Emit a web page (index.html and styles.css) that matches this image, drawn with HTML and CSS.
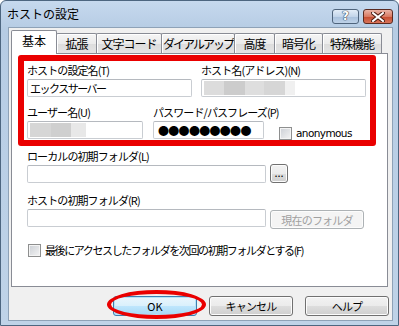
FILE: index.html
```html
<!DOCTYPE html>
<html lang="ja">
<head>
    <meta charset="UTF-8">
    <title>ホストの設定</title>
    <link rel="stylesheet" href="styles.css">
</head>
<body>
    <div class="window">
        <div class="titlebar">
            <span class="title">ホストの設定</span>
            <div class="caption-btns">
                <span class="cap help">?</span>
                <span class="cap close">
                    <svg width="14" height="10" viewBox="0 0 14 10">
                        <path d="M2 1 L12 9 M12 1 L2 9" stroke="#4a1a10" stroke-width="4" stroke-linecap="square"/>
                        <path d="M2 1 L12 9 M12 1 L2 9" stroke="#fff" stroke-width="2" stroke-linecap="square"/>
                    </svg>
                </span>
            </div>
        </div>

        <div class="client">
            <div class="tabs">
                <span class="tab active w-kihon">基本</span>
                <span class="tab w-kakucho">拡張</span>
                <span class="tab w-moji">文字コード</span>
                <span class="tab w-dial">ダイアルアップ</span>
                <span class="tab w-kodo">高度</span>
                <span class="tab w-ango">暗号化</span>
                <span class="tab w-tokushu">特殊機能</span>
            </div>

            <div class="panel">
                <div class="mark-rect"></div>

                <div class="row row-1">
                    <div class="field w-165">
                        <span class="label">ホストの設定名(T)</span>
                        <div class="input">エックスサーバー</div>
                    </div>
                    <div class="field w-165">
                        <span class="label">ホスト名(アドレス)(N)</span>
                        <div class="input">
                            <span class="blur b-host1"></span><span class="blur b-host2"></span><span class="blur b-host3"></span><span class="blur b-host4"></span><span class="blur b-host5"></span>
                        </div>
                    </div>
                </div>

                <div class="row row-2">
                    <div class="field w-116">
                        <span class="label">ユーザー名(U)</span>
                        <div class="input">
                            <span class="blur b-user1"></span><span class="blur b-user2"></span><span class="blur b-user3"></span>
                        </div>
                    </div>
                    <div class="field w-111">
                        <span class="label">パスワード/パスフレーズ(P)</span>
                        <div class="input dots">●●●●●●●●●</div>
                    </div>
                    <label class="check anon"><span class="box"></span><span class="check-text latin">anonymous</span></label>
                </div>

                <div class="field row-3">
                    <span class="label">ローカルの初期フォルダ(L)</span>
                    <div class="input-line">
                        <div class="input w-239"></div>
                        <span class="btn small">...</span>
                    </div>
                </div>

                <div class="field row-4">
                    <span class="label">ホストの初期フォルダ(R)</span>
                    <div class="input-line">
                        <div class="input w-239"></div>
                        <span class="btn disabled w-94">現在のフォルダ</span>
                    </div>
                </div>

                <label class="check row-5"><span class="box"></span><span class="check-text tight">最後にアクセスしたフォルダを次回の初期フォルダとする(F)</span></label>
            </div>

            <div class="buttons">
                <span class="btn default w-84">OK<span class="mark-ellipse"></span></span>
                <span class="btn w-84">キャンセル</span>
                <span class="btn w-84">ヘルプ</span>
            </div>
        </div>
    </div>
</body>
</html>
```

FILE: styles.css
```css
body {
    margin: 0;
    background: #ffffff;
    font-family: "Noto Sans CJK JP", sans-serif;
    color: #000;
}

.window {
    width: 399px;
    height: 326px;
    box-sizing: border-box;
    background: linear-gradient(#c6d9ee, #b6cce4 28px, #bfd3e8);
    border: 1px solid #4d6680;
    border-radius: 6px 6px 0 0;
    display: flex;
    flex-direction: column;
}

/* title bar */

.titlebar {
    height: 26px;
    display: flex;
    align-items: flex-start;
    justify-content: space-between;
}

.title {
    font-size: 12px;
    line-height: 14px;
    margin: 6px 0 0 6px;
}

.caption-btns {
    display: flex;
    gap: 4px;
    margin: 8px 5px 0 0;
}

.cap {
    height: 13px;
    border: 1px solid #4f647c;
    border-radius: 3px;
    display: flex;
    align-items: center;
    justify-content: center;
}

.cap.help {
    width: 25px;
    background: linear-gradient(#e3edf8, #c3d5ea 50%, #a8c0dc 51%, #bed2e8);
    color: #fff;
    font-family: "DejaVu Sans", sans-serif;
    font-weight: bold;
    font-size: 12px;
    line-height: 13px;
    text-shadow: 0 0 1px #2c3e55, 0 0 1px #2c3e55, 0 0 1px #2c3e55;
}

.cap.close {
    width: 28px;
    background: linear-gradient(#eab3a6, #d97a63 50%, #c54a2e 51%, #d8745a);
    border-color: #5a2a20;
}

/* client area */

.client {
    flex: 1;
    margin: 0 5px 4px 7px;
    background: #f0f0f0;
    border: 1px solid #8ea2b7;
}

.tabs {
    display: flex;
    align-items: flex-end;
    height: 24px;
    margin: 1px 0 0 2px;
    position: relative;
    z-index: 1;
}

.tab {
    box-sizing: border-box;
    height: 20px;
    border: 1px solid #898c95;
    border-bottom: none;
    border-radius: 2px 2px 0 0;
    background: linear-gradient(#f5f5f5, #ebebeb 50%, #dcdcdc 51%, #e4e4e4);
    box-shadow: inset 1px 1px 0 #fff;
    font-size: 12px;
    letter-spacing: -1px;
    line-height: 19px;
    text-align: center;
    white-space: nowrap;
}

.tab + .tab {
    margin-left: -1px;
}

.tab.active {
    height: 24px;
    background: #fff;
    box-shadow: none;
    letter-spacing: 0;
    line-height: 20px;
    margin-bottom: -1px;
    position: relative;
    z-index: 2;
}

.w-kihon { width: 46px; }
.w-kakucho { width: 41px; }
.w-moji { width: 66px; }
.w-dial { width: 74px; letter-spacing: -2px; }
.w-kodo { width: 41px; }
.w-ango { width: 49px; }
.w-tokushu { width: 60px; }

.panel {
    box-sizing: border-box;
    width: 377px;
    height: 234px;
    margin-left: 2px;
    border: 1px solid #898c95;
    background: #fff;
    padding: 9px 0 0 15px;
    position: relative;
}

.mark-rect {
    position: absolute;
    left: 6px;
    top: 1px;
    width: 358px;
    height: 91px;
    box-sizing: border-box;
    border: 6px solid #ea0000;
    border-radius: 3px;
}

/* fields */

.row {
    display: flex;
    gap: 9px;
}

.row-2 {
    margin-top: 8px;
    gap: 10px;
}

.row-3 {
    margin-top: 9px;
}

.row-4 {
    margin-top: 10px;
}

.field {
    display: flex;
    flex-direction: column;
}

.label {
    font-size: 11px;
    letter-spacing: -0.9px;
    line-height: 14px;
    white-space: nowrap;
}

.input {
    box-sizing: border-box;
    height: 18px;
    margin-top: 2px;
    border: 1px solid #c9cdd2;
    border-top-color: #b5b9bf;
    border-radius: 2px;
    background: #fff;
    font-size: 11px;
    letter-spacing: -1.5px;
    line-height: 16px;
    padding: 0 2px;
    display: flex;
    align-items: stretch;
    white-space: nowrap;
}

.input .blur {
    margin: 1px 0;
}

.w-165 { width: 165px; }
.w-116 { width: 116px; }
.w-111 { width: 111px; }
.w-239 { width: 239px; }
.w-94 { width: 94px; }
.w-84 { width: 84px; }

.b-user1 { width: 21px; background: #d6d6d6; }
.b-user2 { width: 20px; background: #cfcfcf; }
.b-user3 { width: 15px; background: #e8e8e8; }

.b-host1 { width: 20px; background: #dcdcdc; }
.b-host2 { width: 21px; background: #cccccc; }
.b-host3 { width: 19px; background: #dedede; }
.b-host4 { width: 21px; background: #d6d6d6; }
.b-host5 { width: 10px; background: #f0f0f0; }

.dots {
    font-size: 11px;
    letter-spacing: -0.7px;
    padding-left: 4px;
}

.input-line {
    display: flex;
    align-items: flex-start;
    gap: 4px;
}

/* checkboxes */

.check {
    display: flex;
    align-items: center;
    gap: 4px;
}

.anon {
    margin: 21px 0 0 5px;
    align-self: flex-start;
}

.row-5 {
    margin: 14px 0 0 1px;
}

.box {
    box-sizing: border-box;
    width: 13px;
    height: 13px;
    border: 1px solid #8e8f8f;
    background: linear-gradient(135deg, #cbcfd5, #f4f4f4);
    box-shadow: inset 0 0 0 1px #f4f4f4;
}

.check-text {
    font-size: 11px;
    letter-spacing: -0.8px;
    line-height: 14px;
    white-space: nowrap;
}

.check-text.tight {
    letter-spacing: -1.4px;
}

.check-text.latin {
    font-family: "DejaVu Sans", sans-serif;
    font-size: 10.5px;
    letter-spacing: -0.6px;
}

/* buttons */

.btn {
    box-sizing: border-box;
    height: 20px;
    border: 1px solid #707070;
    border-radius: 3px;
    background: linear-gradient(#f2f2f2, #ebebeb 50%, #dddddd 51%, #cfcfcf);
    box-shadow: inset 0 0 0 1px #fcfcfc;
    font-size: 11px;
    letter-spacing: -0.8px;
    line-height: 18px;
    text-align: center;
    white-space: nowrap;
    position: relative;
}

.btn.small {
    width: 18px;
    height: 19px;
    margin-top: 1px;
    line-height: 14px;
    letter-spacing: 0;
}

.input-line .btn.disabled {
    height: 19px;
    margin-top: 3px;
    border-color: #adb2b5;
    background: #f4f4f4;
    color: #a0a0a0;
}

.btn.default {
    border-color: #3c7fb1;
    background: linear-gradient(#eaf6fd, #d9f0fc 50%, #bee6fd 51%, #a7d9f5);
    box-shadow: inset 0 0 0 1px #b6e3f8;
    letter-spacing: 0;
}

.buttons {
    display: flex;
    gap: 12px;
    margin: 9px 0 0 104px;
}

.mark-ellipse {
    position: absolute;
    left: -7px;
    top: -7px;
    width: 99px;
    height: 29px;
    box-sizing: border-box;
    border: 4px solid #ea0000;
    border-radius: 50%;
}
```
